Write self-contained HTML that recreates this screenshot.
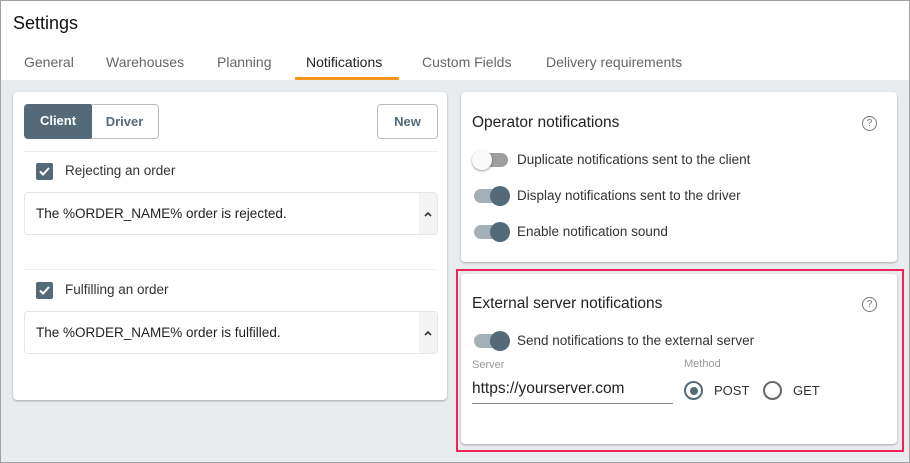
<!DOCTYPE html>
<html><head><style>
*{box-sizing:border-box;margin:0;padding:0}
body{width:910px;height:463px;font-family:"Liberation Sans",sans-serif;color:#333;position:relative;overflow:hidden;background:#e9ecef}
.frame{position:absolute;left:0;top:0;width:910px;height:463px;border:1px solid #a0a0a0;z-index:10;pointer-events:none}
.head{position:absolute;left:0;top:0;width:910px;height:80px;background:#fff}
.t{position:absolute;white-space:nowrap}
.card{position:absolute;background:#fff;border-radius:4px;box-shadow:0 1px 2px rgba(0,0,0,.3)}
.tab{position:absolute;top:54px;font-size:14px;color:#666}
.tog{position:absolute;width:34px;height:14px;border-radius:7px}
.tog.on{background:#a3b0b8}
.tog.on::after{content:"";position:absolute;right:-2px;top:-3px;width:20px;height:20px;border-radius:50%;background:#546a78}
.tog.off{background:#9e9e9e}
.tog.off::after{content:"";position:absolute;left:-2px;top:-3px;width:20px;height:20px;border-radius:50%;background:#fafafa;box-shadow:0 1px 2px rgba(0,0,0,.4)}
.cb{position:absolute;width:17px;height:17px;background:#546a78;border-radius:2px}
.txt{position:absolute;border:1px solid #e6e6e6;border-radius:4px;height:43px;background:#fff}
.txt .arr{position:absolute;right:0;top:0;width:18px;height:41px;background:#f3f3f3}
.help{position:absolute;width:15px;height:15px;border:1.3px solid #777;border-radius:50%;font-size:10px;line-height:13px;text-align:center;color:#777}
</style></head><body>
<div class="head"></div>
<div class="t" style="left:13px;top:13px;font-size:18px;color:#111">Settings</div>
<div class="tab" style="left:24px">General</div>
<div class="tab" style="left:106px">Warehouses</div>
<div class="tab" style="left:217px">Planning</div>
<div class="tab" style="left:306px;color:#222">Notifications</div>
<div style="position:absolute;left:295px;top:77px;width:104px;height:3px;background:#f7941d"></div>
<div class="tab" style="left:422px">Custom Fields</div>
<div class="tab" style="left:546px">Delivery requirements</div>

<div class="card" style="left:13px;top:92px;width:434px;height:308px"></div>
<div style="position:absolute;left:24px;top:104px;width:68px;height:35px;background:#546a78;border-radius:4px 0 0 4px;color:#fff;font-weight:bold;font-size:13px;text-align:center;line-height:34px">Client</div>
<div style="position:absolute;left:91px;top:104px;width:68px;height:35px;border:1px solid #b8c0c6;border-left:none;border-radius:0 4px 4px 0;color:#546a78;font-weight:bold;font-size:13px;text-align:center;line-height:33px">Driver</div>
<div style="position:absolute;left:377px;top:104px;width:61px;height:35px;border:1px solid #b8c0c6;border-radius:4px;color:#546a78;font-weight:bold;font-size:13px;text-align:center;line-height:33px">New</div>
<div style="position:absolute;left:24px;top:151px;width:414px;height:1px;background:#eceff1"></div>
<div class="cb" style="left:36px;top:163px"><svg width="17" height="17"><path d="M4 8.5l3 3 6-6.5" stroke="#fff" stroke-width="2" fill="none"/></svg></div>
<div class="t" style="left:65px;top:163px;font-size:13.5px">Rejecting an order</div>
<div class="txt" style="left:24px;top:192px;width:414px"><div class="t" style="left:11px;top:13px;font-size:13.5px;color:#222">The %ORDER_NAME% order is rejected.</div><div class="arr"><svg width="18" height="41"><path d="M6 23l3-3 3 3" stroke="#333" stroke-width="1.6" fill="none"/></svg></div></div>
<div style="position:absolute;left:24px;top:269px;width:414px;height:1px;background:#eceff1"></div>
<div class="cb" style="left:36px;top:282px"><svg width="17" height="17"><path d="M4 8.5l3 3 6-6.5" stroke="#fff" stroke-width="2" fill="none"/></svg></div>
<div class="t" style="left:65px;top:282px;font-size:13.5px">Fulfilling an order</div>
<div class="txt" style="left:24px;top:311px;width:414px"><div class="t" style="left:11px;top:13px;font-size:13.5px;color:#222">The %ORDER_NAME% order is fulfilled.</div><div class="arr"><svg width="18" height="41"><path d="M6 23l3-3 3 3" stroke="#333" stroke-width="1.6" fill="none"/></svg></div></div>

<div class="card" style="left:461px;top:92px;width:436px;height:170px"></div>
<div class="t" style="left:472px;top:114px;font-size:15.5px;color:#222">Operator notifications</div>
<div class="help" style="left:862px;top:116px">?</div>
<div class="tog off" style="left:474px;top:153px"></div>
<div class="t" style="left:517px;top:152px;font-size:13.5px">Duplicate notifications sent to the client</div>
<div class="tog on" style="left:474px;top:189px"></div>
<div class="t" style="left:517px;top:188px;font-size:13.5px">Display notifications sent to the driver</div>
<div class="tog on" style="left:474px;top:225px"></div>
<div class="t" style="left:517px;top:224px;font-size:13.5px">Enable notification sound</div>

<div style="position:absolute;left:456px;top:269px;width:448px;height:183px;border:2px solid #f0245a"></div>
<div class="card" style="left:461px;top:274px;width:436px;height:170px"></div>
<div class="t" style="left:472px;top:295px;font-size:15.5px;color:#222">External server notifications</div>
<div class="help" style="left:862px;top:297px">?</div>
<div class="tog on" style="left:474px;top:334px"></div>
<div class="t" style="left:517px;top:333px;font-size:13.5px">Send notifications to the external server</div>
<div class="t" style="left:472px;top:359px;font-size:11px;color:#999">Server</div>
<div class="t" style="left:472px;top:380px;font-size:15.5px;color:#222">https://yourserver.com</div>
<div style="position:absolute;left:472px;top:403px;width:201px;height:1px;background:#888"></div>
<div class="t" style="left:684px;top:358px;font-size:11px;color:#999">Method</div>
<div style="position:absolute;left:684px;top:381px;width:19px;height:19px;border:2px solid #546a78;border-radius:50%"><div style="position:absolute;left:3.5px;top:3.5px;width:8px;height:8px;border-radius:50%;background:#546a78"></div></div>
<div class="t" style="left:714px;top:383px;font-size:13px">POST</div>
<div style="position:absolute;left:763px;top:381px;width:19px;height:19px;border:2px solid #666;border-radius:50%"></div>
<div class="t" style="left:793px;top:383px;font-size:13px">GET</div>
<div class="frame"></div>
</body></html>
